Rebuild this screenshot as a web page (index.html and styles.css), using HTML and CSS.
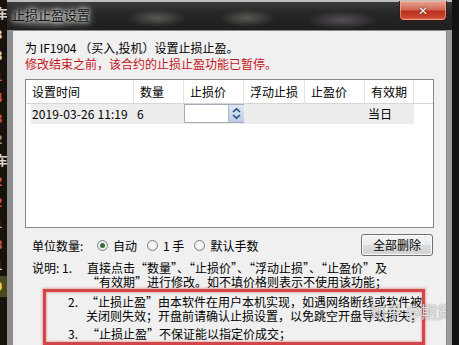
FILE: index.html
```html
<!DOCTYPE html>
<html>
<head>
<meta charset="utf-8">
<link rel="stylesheet" href="styles.css">
</head>
<body>
<div class="screen">
  <div class="bgleft">
    <div class="ticks">
      <span class="c-w">车</span><span class="c-w">3</span><span class="c-w">8</span><span class="c-r">1</span><span class="c-r">4</span><span class="c-r">3</span><span class="c-g">2</span><span class="c-w">车</span><span class="c-r">2</span><span class="c-r">2</span><span class="c-g">1</span><span class="c-r">8</span><span class="c-w">1</span><span class="c-y">9</span>
    </div>
  </div>
  <div class="window">
    <div class="titlebar">
      <span class="title">止损止盈设置</span>
      <div class="close"><span class="x">✕</span></div>
    </div>
    <div class="frame">
      <div class="client">
        <div class="line">为 IF1904 （买入,投机）设置止损止盈。</div>
        <div class="line red">修改结束之前，该合约的止损止盈功能已暂停。</div>

        <div class="list">
          <div class="hdr">
            <div class="col c1">设置时间</div>
            <div class="col c2">数量</div>
            <div class="col c3">止损价</div>
            <div class="col c4">浮动止损</div>
            <div class="col c5">止盈价</div>
            <div class="col c6">有效期</div>
            <div class="col cx"></div>
          </div>
          <div class="row">
            <div class="cell c1 date">2019-03-26 11:19</div>
            <div class="cell c2">6</div>
            <div class="cell c3 editcell">
              <div class="edit">
                <div class="editin"></div>
                <div class="spin">
                  <svg width="9" height="13" viewBox="0 0 9 13"><path d="M1 5 L4.5 1.8 L8 5" fill="none" stroke="#2c4f86" stroke-width="1.6"/><path d="M1 8 L4.5 11.2 L8 8" fill="none" stroke="#2c4f86" stroke-width="1.6"/></svg>
                </div>
              </div>
            </div>
            <div class="cell c4"></div>
            <div class="cell c5"></div>
            <div class="cell c6">当日</div>
          </div>
        </div>

        <div class="units">
          <span class="ulabel">单位数量:</span>
          <span class="radio on"></span><span class="rtext">自动</span>
          <span class="radio"></span><span class="rtext">1 手</span>
          <span class="radio"></span><span class="rtext">默认手数</span>
          <span class="spacer"></span>
          <button class="btn">全部删除</button>
        </div>

        <div class="notes">
          <div class="item first">
            <span class="lab">说明:</span><span class="num">1.</span>
            <span class="txt">直接点击“数量”、“止损价”、“浮动止损”、“止盈价”及<br>“有效期”进行修改。如不填价格则表示不使用该功能；</span>
          </div>
          <div class="redbox">
            <div class="item">
              <span class="num">2.</span>
              <span class="txt">“止损止盈”由本软件在用户本机实现，如遇网络断线或软件被<br>关闭则失效；开盘前请确认止损设置，以免跳空开盘导致损失；</span>
            </div>
            <div class="item third">
              <span class="num">3.</span>
              <span class="txt">“止损止盈”不保证能以指定价成交；</span>
            </div>
          </div>
        </div>
        <div class="watermark">知乎 @期货</div>
      </div>
    </div>
  </div>
  <div class="bgright"></div>
</div>
</body>
</html>
```

FILE: styles.css
```css
* { box-sizing: border-box; }
html, body { margin: 0; padding: 0; }
body {
  background: #111;
  font-family: "Noto Sans CJK SC", "Liberation Sans", sans-serif;
  font-size: 12px;
  color: #000;
}
.screen {
  width: 459px;
  height: 345px;
  display: flex;
  overflow: hidden;
  position: relative;
}
.bgleft {
  width: 7px;
  background: #17120d;
  overflow: hidden;
}
.ticks {
  display: flex;
  flex-direction: column;
  margin-left: -5px;
  padding-top: 3px;
  font-family: "Liberation Sans", "Noto Sans CJK SC", sans-serif;
  font-size: 13px;
  line-height: 21px;
  font-weight: bold;
}
.c-w { color: #d8d4cc; }
.c-r { color: #c45a4a; }
.c-g { color: #9a9a90; }
.c-y { color: #e0d060; background: #4a4a20; }
.window {
  width: 445px;
  display: flex;
  flex-direction: column;
  background: linear-gradient(90deg, #8c8c8c, #b8b8b8 60%, #9a9a9a);
}
.titlebar {
  height: 30px;
  display: flex;
  justify-content: space-between;
  align-items: flex-start;
  border-top: 2px solid #bdbdbd;
  background:
    radial-gradient(ellipse 40px 12px at 40px 16px, rgba(150,150,150,0.55), transparent),
    radial-gradient(ellipse 30px 9px at 150px 16px, rgba(140,140,130,0.5), transparent),
    radial-gradient(ellipse 28px 9px at 240px 16px, rgba(140,140,130,0.5), transparent),
    radial-gradient(ellipse 36px 9px at 335px 18px, rgba(150,130,150,0.45), transparent),
    linear-gradient(180deg, #3a3a3a 0%, #262626 40%, #1f1f1f 100%);
}
.title {
  margin: 3px 0 0 5px;
  font-size: 13px;
  line-height: 20px;
  color: #101010;
  text-shadow: 0 0 6px #cfcfcf, 0 0 3px #e0e0e0, 0 0 10px #bbb;
}
.close {
  width: 48px;
  height: 20px;
  margin-right: 5px;
  margin-top: -1px;
  border: 1px solid #3a1a16;
  border-top: none;
  border-radius: 0 0 5px 5px;
  background: linear-gradient(180deg, #e9a594 0%, #d26a55 45%, #b8321f 55%, #c9442e 85%, #e07a5e 100%);
  box-shadow: inset 0 0 0 1px rgba(255,200,190,0.5);
  display: flex;
  align-items: center;
  justify-content: center;
}
.x {
  color: #fff;
  font-family: "DejaVu Sans", sans-serif;
  font-size: 12px;
  font-weight: bold;
  line-height: 12px;
  text-shadow: 0 0 2px #5a1a10, 0 0 1px #5a1a10;
}
.frame {
  flex: 1;
  padding: 0 5px;
  display: flex;
}
.client {
  flex: 1;
  background: #f0f0f0;
  border: 1px solid #8a8a8a;
  border-bottom: none;
  padding: 9px 12px 0 12px;
  position: relative;
  overflow: hidden;
}
.line {
  line-height: 16px;
  height: 16px;
  white-space: nowrap;
}
.red { color: #c4161c; }
.list {
  margin-top: 7px;
  width: 409px;
  height: 149px;
  background: #fff;
  border: 1px solid #828790;
}
.hdr {
  display: flex;
  height: 24px;
  border-bottom: 1px solid #d5d5d5;
}
.col {
  line-height: 23px;
  padding-left: 6px;
  border-right: 1px solid #e3e3e3;
  white-space: nowrap;
}
.cx { border-right: none; flex: 1; }
.c1 { width: 108px; }
.c2 { width: 50px; }
.c3 { width: 60px; }
.c4 { width: 61px; }
.c5 { width: 60px; }
.c6 { width: 49px; }
.row {
  display: flex;
  height: 20px;
  margin-left: 5px;
}
.row .c1 { width: 103px; }
.cell {
  background: #ededed;
  line-height: 20px;
  padding-left: 3px;
  white-space: nowrap;
}
.date { padding-left: 1px; letter-spacing: 0.1px; }
.row .c6 { padding-left: 3px; }
.editcell { padding: 0; background: #ededed; }
.edit {
  display: flex;
  width: 61px;
  height: 19px;
  border: 1px solid #a5acb5;
  background: #fff;
}
.editin { flex: 1; }
.spin {
  width: 16px;
  background: linear-gradient(180deg, #dfe8f5, #bccbe4);
  border-left: 1px solid #a9b8d2;
  display: flex;
  align-items: center;
  justify-content: center;
}
.units {
  display: flex;
  align-items: center;
  margin-top: 6px;
  height: 22px;
  padding-left: 7px;
  white-space: nowrap;
}
.ulabel { width: 65px; }
.radio {
  width: 11px;
  height: 11px;
  border-radius: 50%;
  border: 1px solid #7a7f86;
  background: radial-gradient(circle, #fdfdfd, #e4e4e4);
  margin-right: 5px;
  display: inline-flex;
  align-items: center;
  justify-content: center;
}
.radio.on::after {
  content: "";
  width: 5px;
  height: 5px;
  border-radius: 50%;
  background: #3c6a3a;
}
.rtext { margin-right: 10px; }
.spacer { flex: 1; }
.btn {
  width: 72px;
  height: 22px;
  margin-right: 1px;
  font-family: "Noto Sans CJK SC", sans-serif;
  font-size: 12px;
  line-height: 18px;
  color: #000;
  border: 1px solid #707070;
  border-radius: 3px;
  background: linear-gradient(180deg, #f4f4f4 0%, #ebebeb 48%, #dcdcdc 52%, #d2d2d2 100%);
  box-shadow: inset 0 0 0 1px #fcfcfc;
  padding: 0;
}
.notes { margin-top: 5px; }
.item {
  display: flex;
  line-height: 14px;
  white-space: nowrap;
}
.item.first { padding-left: 7px; }
.lab { width: 29px; }
.num { width: 26px; padding-left: 1px; }
.redbox {
  margin-left: 18px;
  width: 382px;
  height: 56px;
  border: 3px solid #d2464a;
  box-shadow: 0 0 2px 1px rgba(230,120,120,0.6), inset 0 0 2px 1px rgba(230,130,130,0.5);
  padding: 3px 0 0 22px;
  margin-top: 0;
}
.redbox .num { width: 19px; padding-left: 0; }
.item.third { margin-top: 4px; }
.watermark {
  position: absolute;
  left: 357px;
  top: 270px;
  font-size: 16px;
  line-height: 20px;
  white-space: nowrap;
  color: rgba(255,255,255,0.8);
  text-shadow: 0 0 1px rgba(80,80,80,0.6), 0 0 2px rgba(80,80,80,0.4);
}
```
